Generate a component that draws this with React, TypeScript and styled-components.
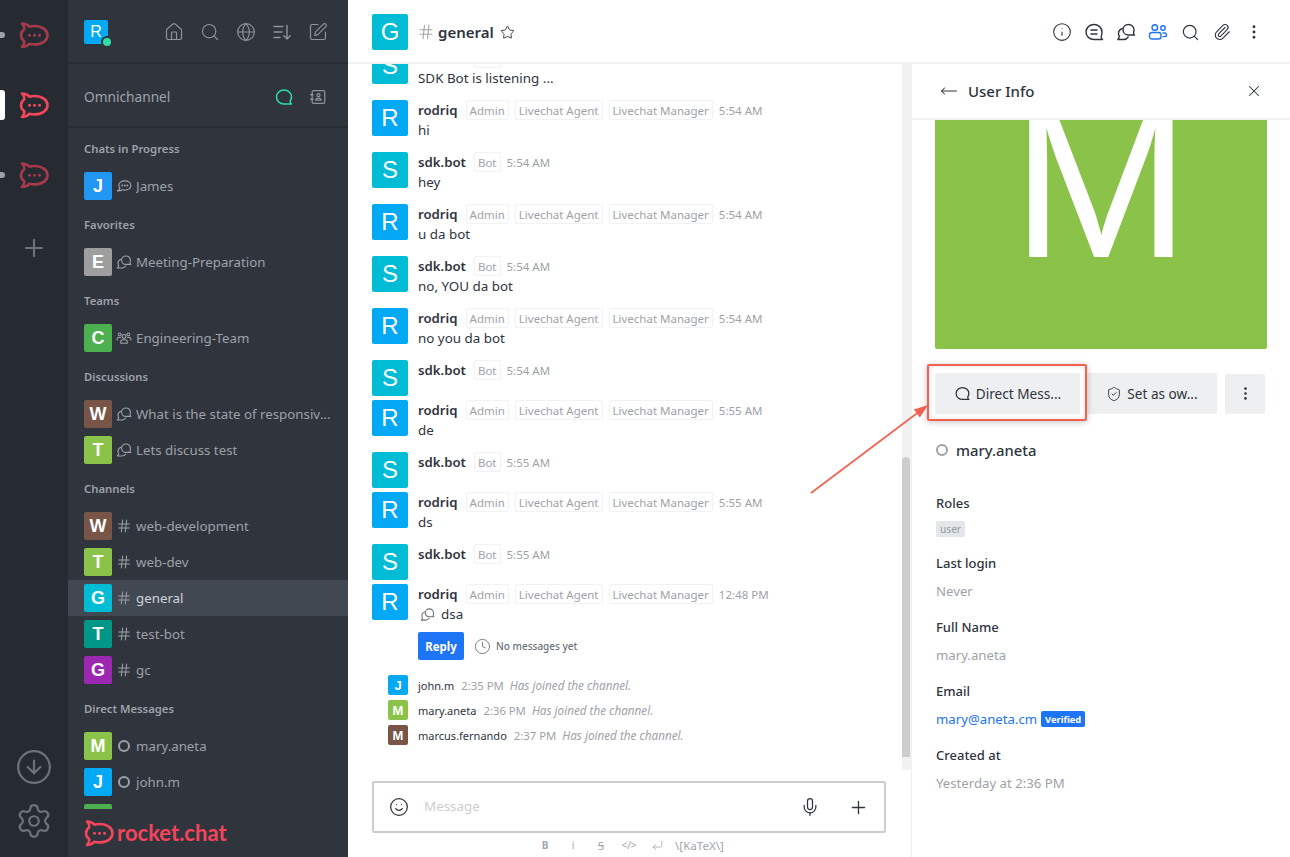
import React from 'react'
import styled, { createGlobalStyle } from 'styled-components'
import {
  CircleArrowDown, EllipsisVertical, Globe, Hash, House, Info, Mic, Paperclip, Plus,
  Search, Settings, ShieldCheck, Smile, SquarePen, Star, X, Clock, CornerDownLeft, MoveLeft,
} from 'lucide-react'

const GlobalStyle = createGlobalStyle`
  html, body {
    margin: 0;
    height: 100%;
    overflow: hidden;
    background: #fff;
    font-family: "Noto Sans", "Liberation Sans", sans-serif;
  }
  * { box-sizing: border-box; }
`

const RED = '#f5455c'

type IconProps = { size?: number }

const RocketLogo: React.FC<{ size: number; color: string }> = ({ size, color }) => (
  <svg width={size} height={size * 0.9} viewBox="0 0 30 27" fill="none">
    <path
      d="M3 1.5C6 1.5 9 3 10.5 4.7C12 4.2 14 4 15.5 4C23 4 28.5 8 28.5 13.2C28.5 18.6 23 22.4 15.5 22.4C13.5 22.4 12 22.2 10.5 21.7C8.5 24 6 25 3 25C4.5 23 5.6 20.8 5.3 19.2C3 17.6 2 15.6 2 13.2C2 10.8 3.2 8.7 5.3 7.2C5.5 5.2 4.5 3.2 3 1.5Z"
      stroke={color}
      strokeWidth="2.6"
      strokeLinejoin="round"
    />
    <circle cx="10.5" cy="13.2" r="1.5" fill={color} />
    <circle cx="15.5" cy="13.2" r="1.5" fill={color} />
    <circle cx="20.5" cy="13.2" r="1.5" fill={color} />
  </svg>
)

const ChatIcon: React.FC<IconProps> = ({ size = 16 }) => (
  <svg width={size} height={size} viewBox="0 0 20 20" fill="none" stroke="currentColor" strokeWidth="1.5" strokeLinecap="round" strokeLinejoin="round">
    <path d="M10 3C5.8 3 2.5 6 2.5 10S5.8 17 10 17H17.5C16.4 16.2 16 15 16.2 14C17 12.9 17.5 11.5 17.5 10C17.5 6 14.2 3 10 3Z" />
  </svg>
)

const TeamChatIcon: React.FC<IconProps> = ({ size = 20 }) => (
  <svg width={size} height={size} viewBox="0 0 20 20" fill="none" stroke="currentColor" strokeWidth="1.4" strokeLinecap="round" strokeLinejoin="round">
    <path d="M10 2.5C5.6 2.5 2 5.7 2 10S5.6 17.5 10 17.5H18.5C17.4 16.7 17 15.6 17.2 14.4C17.7 13.2 18 11.6 18 10C18 5.7 14.4 2.5 10 2.5Z" />
    <path d="M7 8H13M7 12H13" />
  </svg>
)

const DiscussionIcon: React.FC<IconProps> = ({ size = 16 }) => (
  <svg width={size} height={size} viewBox="0 0 20 20" fill="none" stroke="currentColor" strokeWidth="1.4" strokeLinecap="round" strokeLinejoin="round">
    <path d="M12.5 2.5C9.4 2.5 7 4.8 7 7.8S9.4 13 12.5 13H18.5C17.6 12.3 17.4 11.4 17.6 10.5C17.9 9.7 18 8.8 18 7.8C18 4.8 15.6 2.5 12.5 2.5Z" />
    <path d="M6.2 6.5C3.9 7.3 2.5 9.3 2.5 11.5C2.5 12.6 2.8 13.5 3.3 14.3C3.3 15.4 2.8 16.5 1.8 17.5H7.5C9.5 17.5 11.2 16.5 12.2 15" />
  </svg>
)

const SortIcon: React.FC<IconProps> = ({ size = 20 }) => (
  <svg width={size} height={size} viewBox="0 0 20 20" fill="none" stroke="currentColor" strokeWidth="1.4" strokeLinecap="round" strokeLinejoin="round">
    <path d="M2 4.5H11M2 10H10M2 15.5H8" />
    <path d="M15 3.5V17M11.8 13.8L15 17L18.2 13.8" />
  </svg>
)

const ContactIcon: React.FC<IconProps> = ({ size = 18 }) => (
  <svg width={size} height={size} viewBox="0 0 20 20" fill="none" stroke="currentColor" strokeWidth="1.4" strokeLinecap="round" strokeLinejoin="round">
    <rect x="3.5" y="3" width="14" height="14" rx="1.5" />
    <path d="M1.8 7.5H4.6M1.8 12.5H4.6" />
    <circle cx="10.5" cy="8" r="1.7" />
    <path d="M7.5 13.5C7.5 11.8 8.5 11.2 10.5 11.2S13.5 11.8 13.5 13.5Z" />
  </svg>
)

const LivechatIcon: React.FC<IconProps> = ({ size = 16 }) => (
  <svg width={size} height={size} viewBox="0 0 20 20" fill="none" stroke="currentColor" strokeWidth="1.5" strokeLinecap="round" strokeLinejoin="round">
    <path d="M11 3.5C6.6 3.5 3.5 6 3.5 9.3C3.5 10.6 4 11.7 4.9 12.6C4.8 14 3.8 15.2 1.8 16C4.5 16.2 6.4 15.7 7.7 14.7C8.7 15 9.8 15.1 11 15.1C15.4 15.1 18.5 12.6 18.5 9.3S15.4 3.5 11 3.5Z" />
    <circle cx="7.8" cy="9.3" r="0.5" />
    <circle cx="11" cy="9.3" r="0.5" />
    <circle cx="14.2" cy="9.3" r="0.5" />
  </svg>
)

const TeamIcon: React.FC<IconProps> = ({ size = 16 }) => (
  <svg width={size} height={size} viewBox="0 0 20 20" fill="none" stroke="currentColor" strokeWidth="1.4" strokeLinecap="round" strokeLinejoin="round">
    <circle cx="10" cy="8" r="2.4" />
    <path d="M6 16.5V14.5C6 13 7.2 12.2 8.5 12.2H11.5C12.8 12.2 14 13 14 14.5V16.5Z" />
    <circle cx="4.6" cy="5.6" r="1.8" />
    <circle cx="15.4" cy="5.6" r="1.8" />
    <path d="M1.5 12.5V11C1.5 10 2.3 9.4 3.2 9.4H5.5M18.5 12.5V11C18.5 10 17.7 9.4 16.8 9.4H14.5" />
  </svg>
)

const MembersIcon: React.FC<IconProps> = ({ size = 20 }) => (
  <svg width={size} height={size} viewBox="0 0 20 20" fill="none" stroke="currentColor" strokeWidth="1.4" strokeLinecap="round" strokeLinejoin="round">
    <circle cx="6.8" cy="5.5" r="2.8" />
    <circle cx="15" cy="6" r="2.2" />
    <rect x="1.5" y="10.5" width="11.5" height="6.5" rx="2.5" />
    <path d="M15 11H16.5C17.6 11 18.5 11.7 18.5 12.8C18.5 13.9 17.6 14.6 16.5 14.6H15" />
  </svg>
)

type Avatarish = { letter: string; color: string }

type RoomItem = Avatarish & { name: string; icon: 'hash' | 'discussion' | 'team' | 'live' | 'offline' | 'none'; active?: boolean }
type RoomGroup = { title: string; rooms: RoomItem[] }

const GROUPS: RoomGroup[] = [
  { title: 'Chats in Progress', rooms: [{ letter: 'J', color: '#2196f3', name: 'James', icon: 'live' }] },
  { title: 'Favorites', rooms: [{ letter: 'E', color: '#9e9e9e', name: 'Meeting-Preparation', icon: 'discussion' }] },
  { title: 'Teams', rooms: [{ letter: 'C', color: '#4caf50', name: 'Engineering-Team', icon: 'team' }] },
  {
    title: 'Discussions',
    rooms: [
      { letter: 'W', color: '#795548', name: 'What is the state of responsive design?', icon: 'discussion' },
      { letter: 'T', color: '#8bc34a', name: 'Lets discuss test', icon: 'discussion' },
    ],
  },
  {
    title: 'Channels',
    rooms: [
      { letter: 'W', color: '#795548', name: 'web-development', icon: 'hash' },
      { letter: 'T', color: '#8bc34a', name: 'web-dev', icon: 'hash' },
      { letter: 'G', color: '#00bcd4', name: 'general', icon: 'hash', active: true },
      { letter: 'T', color: '#009688', name: 'test-bot', icon: 'hash' },
      { letter: 'G', color: '#9c27b0', name: 'gc', icon: 'hash' },
    ],
  },
  {
    title: 'Direct Messages',
    rooms: [
      { letter: 'M', color: '#8bc34a', name: 'mary.aneta', icon: 'offline' },
      { letter: 'J', color: '#03a9f4', name: 'john.m', icon: 'offline' },
      // only the top edge of this row shows above the footer
      { letter: '', color: '#4caf50', name: '', icon: 'none' },
    ],
  },
]

type Msg = Avatarish & { user: string; tags: string[]; time: string; text?: string }

const RODRIQ = { letter: 'R', color: '#03a9f4', user: 'rodriq', tags: ['Admin', 'Livechat Agent', 'Livechat Manager'] }
const BOT = { letter: 'S', color: '#00bcd4', user: 'sdk.bot', tags: ['Bot'] }

const MESSAGES: Msg[] = [
  { ...BOT, time: '5:54 AM', text: 'SDK Bot is listening ...' },
  { ...RODRIQ, time: '5:54 AM', text: 'hi' },
  { ...BOT, time: '5:54 AM', text: 'hey' },
  { ...RODRIQ, time: '5:54 AM', text: 'u da bot' },
  { ...BOT, time: '5:54 AM', text: 'no, YOU da bot' },
  { ...RODRIQ, time: '5:54 AM', text: 'no you da bot' },
  { ...BOT, time: '5:54 AM' },
  { ...RODRIQ, time: '5:55 AM', text: 'de' },
  { ...BOT, time: '5:55 AM' },
  { ...RODRIQ, time: '5:55 AM', text: 'ds' },
  { ...BOT, time: '5:55 AM' },
]

const JOINS = [
  { letter: 'J', color: '#03a9f4', user: 'john.m', time: '2:35 PM' },
  { letter: 'M', color: '#8bc34a', user: 'mary.aneta', time: '2:36 PM' },
  { letter: 'M', color: '#795548', user: 'marcus.fernando', time: '2:37 PM' },
]

const INFO = [
  { label: 'Last login', value: 'Never' },
  { label: 'Full Name', value: 'mary.aneta' },
]

const App: React.FC = () => (
  <Page>
    <GlobalStyle />
    <Rail>
      <RailLogo>
        <RailMark />
        <RocketLogo size={30} color="#a63a4a" />
      </RailLogo>
      <RailLogo>
        <RailMark $active />
        <RocketLogo size={30} color={RED} />
      </RailLogo>
      <RailLogo>
        <RailMark />
        <RocketLogo size={30} color="#a63a4a" />
      </RailLogo>
      <RailAdd>
        <Plus size={28} strokeWidth={1.8} />
      </RailAdd>
      <RailBottom>
        <CircleArrowDown size={38} strokeWidth={1.4} />
        <Settings size={38} strokeWidth={1.4} />
      </RailBottom>
    </Rail>

    <Sidebar>
      <SideHeader>
        <UserBadge>
          <Avatar $size={24} $bg="#03a9f4">R</Avatar>
          <OnlineDot />
        </UserBadge>
        <SideTools>
          <House size={20} strokeWidth={1.4} />
          <Search size={20} strokeWidth={1.4} />
          <Globe size={20} strokeWidth={1.4} />
          <SortIcon />
          <SquarePen size={20} strokeWidth={1.4} />
        </SideTools>
      </SideHeader>
      <OmniRow>
        <span>Omnichannel</span>
        <OmniTools>
          <OmniChat><ChatIcon size={20} /></OmniChat>
          <ContactIcon />
        </OmniTools>
      </OmniRow>
      <RoomList>
        {GROUPS.map((group) => (
          <React.Fragment key={group.title}>
            <GroupTitle>{group.title}</GroupTitle>
            {group.rooms.map((room, i) => (
              <Room key={i} $active={room.active}>
                <Avatar $size={28} $bg={room.color} $bold>{room.letter}</Avatar>
                <RoomIcon>
                  {room.icon === 'hash' && <Hash size={16} strokeWidth={1.5} />}
                  {room.icon === 'discussion' && <DiscussionIcon />}
                  {room.icon === 'team' && <TeamIcon />}
                  {room.icon === 'live' && <LivechatIcon />}
                  {room.icon === 'offline' && <OfflineRing $size={12} $color="#9ea2a8" />}
                </RoomIcon>
                <RoomName $active={room.active}>{room.name}</RoomName>
              </Room>
            ))}
          </React.Fragment>
        ))}
      </RoomList>
      <SideFooter>
        <RocketLogo size={30} color={RED} />
        <Wordmark>rocket.chat</Wordmark>
      </SideFooter>
    </Sidebar>

    <Main>
      <RoomHeader>
        <Avatar $size={36} $bg="#00bcd4">G</Avatar>
        <HeaderHash><Hash size={18} strokeWidth={1.4} /></HeaderHash>
        <RoomTitle>general</RoomTitle>
        <HeaderStar><Star size={15} strokeWidth={1.5} /></HeaderStar>
        <HeaderTools>
          <Info size={20} strokeWidth={1.3} />
          <TeamChatIcon />
          <DiscussionIcon size={20} />
          <ActiveTool><MembersIcon /></ActiveTool>
          <Search size={19} strokeWidth={1.5} />
          <Paperclip size={18} strokeWidth={1.5} />
          <EllipsisVertical size={18} strokeWidth={1.8} />
        </HeaderTools>
      </RoomHeader>

      <Content>
        <ChatColumn>
          <FeedRow>
            <Feed>
              {MESSAGES.map((m, i) => (
                <Message key={i} $tight={!m.text}>
                  <Avatar $size={36} $bg={m.color}>{m.letter}</Avatar>
                  <MessageBody>
                    <MessageMeta>
                      <UserName>{m.user}</UserName>
                      {m.tags.map((t) => <Tag key={t}>{t}</Tag>)}
                      <Time>{m.time}</Time>
                    </MessageMeta>
                    {m.text && <MessageText>{m.text}</MessageText>}
                  </MessageBody>
                </Message>
              ))}
              <Message>
                <Avatar $size={36} $bg="#03a9f4">R</Avatar>
                <MessageBody>
                  <MessageMeta>
                    <UserName>rodriq</UserName>
                    {RODRIQ.tags.map((t) => <Tag key={t}>{t}</Tag>)}
                    <Time>12:48 PM</Time>
                  </MessageMeta>
                  <MessageText>
                    <ThreadIcon><DiscussionIcon size={15} /></ThreadIcon>dsa
                  </MessageText>
                  <ThreadRow>
                    <ReplyButton>Reply</ReplyButton>
                    <Clock size={17} strokeWidth={1.3} />
                    <NoMessages>No messages yet</NoMessages>
                  </ThreadRow>
                </MessageBody>
              </Message>
              <Joins>
                {JOINS.map((j) => (
                  <Join key={j.user}>
                    <Avatar $size={20} $bg={j.color} $bold>{j.letter}</Avatar>
                    <JoinName>{j.user}</JoinName>
                    <JoinTime>{j.time}</JoinTime>
                    <JoinText>Has joined the channel.</JoinText>
                  </Join>
                ))}
              </Joins>
            </Feed>
            <ScrollTrack>
              <ScrollThumb />
            </ScrollTrack>
          </FeedRow>
          <Composer>
            <Smile size={20} strokeWidth={1.5} />
            <Placeholder>Message</Placeholder>
            <MicSlot><Mic size={20} strokeWidth={1.5} /></MicSlot>
            <Plus size={21} strokeWidth={1.5} />
          </Composer>
          <FormatBar>
            <FormatItem $bold>B</FormatItem>
            <FormatItem>i</FormatItem>
            <FormatItem $strike>S</FormatItem>
            <FormatItem>&lt;/&gt;</FormatItem>
            <FormatItem><CornerDownLeft size={13} strokeWidth={1.4} /></FormatItem>
            <KatexLabel>\[KaTeX\]</KatexLabel>
          </FormatBar>
        </ChatColumn>

        <Panel>
          <PanelHeader>
            <MoveLeft size={18} strokeWidth={1.4} />
            <PanelTitle>User Info</PanelTitle>
            <X size={18} strokeWidth={1.4} />
          </PanelHeader>
          <PanelBody>
            <Picture>M</Picture>
            <Actions>
              <ActionButton $width={145}><ChatIcon size={17} />Direct Mess...</ActionButton>
              <ActionButton $width={130}><ShieldCheck size={16} strokeWidth={1.4} />Set as ow...</ActionButton>
              <MoreButton><EllipsisVertical size={17} strokeWidth={1.8} /></MoreButton>
            </Actions>
            <UserLine>
              <OfflineRing $size={12} $color="#9ea2a8" />
              <UserHandle>mary.aneta</UserHandle>
            </UserLine>
            <FieldLabel>Roles</FieldLabel>
            <RoleRow><RoleTag>user</RoleTag></RoleRow>
            {INFO.map((f) => (
              <React.Fragment key={f.label}>
                <FieldLabel>{f.label}</FieldLabel>
                <FieldValue>{f.value}</FieldValue>
              </React.Fragment>
            ))}
            <FieldLabel>Email</FieldLabel>
            <FieldValue>
              <MailLink>mary@aneta.cm</MailLink>
              <Verified>Verified</Verified>
            </FieldValue>
            <FieldLabel>Created at</FieldLabel>
            <FieldValue>Yesterday at 2:36 PM</FieldValue>
          </PanelBody>
        </Panel>
      </Content>
    </Main>

    <CalloutBox />
    <CalloutArrow width="130" height="100" viewBox="0 0 130 100" fill="none">
      <path d="M1 98L110 16" stroke="#f4604f" strokeWidth="1.6" />
      <path d="M118 10L103.8 14.4L109.8 22.4Z" fill="#f4604f" />
    </CalloutArrow>
  </Page>
)

const Page = styled.div`
  position: relative;
  display: flex;
  width: 1290px;
  height: 857px;
  overflow: hidden;
`

const Rail = styled.nav`
  display: flex;
  flex-direction: column;
  flex: 0 0 68px;
  background: #262a31;
  color: #6c727a;
`

const RailLogo = styled.div`
  position: relative;
  display: flex;
  align-items: center;
  justify-content: center;
  height: 70px;
`

const RailMark = styled.span<{ $active?: boolean }>`
  position: absolute;
  left: 0;
  top: 50%;
  width: 5px;
  height: ${({ $active }) => ($active ? '30px' : '6px')};
  margin-top: ${({ $active }) => ($active ? '-15px' : '-3px')};
  background: ${({ $active }) => ($active ? '#fff' : '#9ea2a8')};
  border-radius: 0 3px 3px 0;
`

const RailAdd = styled.div`
  display: flex;
  align-items: center;
  justify-content: center;
  height: 76px;
`

const RailBottom = styled.div`
  display: flex;
  flex-direction: column;
  align-items: center;
  gap: 16px;
  margin-top: auto;
  padding-bottom: 17px;
`

const Sidebar = styled.aside`
  display: flex;
  flex-direction: column;
  flex: 0 0 280px;
  width: 280px;
  min-width: 0;
  background: #2f343d;
  color: #9ea2a8;
`

const SideHeader = styled.div`
  display: flex;
  align-items: center;
  justify-content: space-between;
  flex: 0 0 64px;
  padding: 2px 20px 0 16px;
  border-bottom: 2px solid #282c33;
`

const UserBadge = styled.div`
  position: relative;
  width: 24px;
  height: 24px;
`

const OnlineDot = styled.span`
  position: absolute;
  right: -5px;
  bottom: -4px;
  width: 12px;
  height: 12px;
  border-radius: 50%;
  background: #2de0a5;
  border: 2px solid #2f343d;
`

const SideTools = styled.div`
  display: flex;
  gap: 16px;
  color: #8e939a;
`

const OmniRow = styled.div`
  display: flex;
  align-items: center;
  justify-content: space-between;
  flex: 0 0 64px;
  padding: 3px 21px 0 16px;
  border-bottom: 2px solid #282c33;
  font-size: 13.7px;
`

const OmniTools = styled.div`
  display: flex;
  align-items: center;
  gap: 15px;
  color: #8e939a;
`

const OmniChat = styled.span`
  display: flex;
  color: #2de0a5;
`

const RoomList = styled.div`
  flex: 1;
  min-height: 0;
  overflow: hidden;
`

const GroupTitle = styled.div`
  display: flex;
  align-items: center;
  height: 40px;
  padding: 1px 16px 0;
  font-size: 11.3px;
  font-weight: 600;
  color: #9ea2a8;
`

const Room = styled.div<{ $active?: boolean }>`
  display: flex;
  align-items: center;
  height: 36px;
  padding: 0 15px 0 16px;
  background: ${({ $active }) => ($active ? '#414852' : 'transparent')};
`

const RoomIcon = styled.span`
  display: flex;
  align-items: center;
  justify-content: center;
  flex: 0 0 16px;
  margin: 0 4px;
`

const RoomName = styled.span<{ $active?: boolean }>`
  min-width: 0;
  padding-bottom: 1px;
  overflow: hidden;
  white-space: nowrap;
  text-overflow: ellipsis;
  font-size: 13.3px;
  color: ${({ $active }) => ($active ? '#d0d3d7' : '#9ea2a8')};
`

const SideFooter = styled.div`
  display: flex;
  align-items: flex-start;
  gap: 3px;
  flex: 0 0 48px;
  padding: 11px 16px 0;
  background: #2f343d;
`

const Wordmark = styled.span`
  font-family: "Lato", sans-serif;
  font-size: 22px;
  font-weight: 700;
  line-height: 25px;
  color: ${RED};
`

const Avatar = styled.div<{ $size: number; $bg: string; $bold?: boolean }>`
  display: flex;
  align-items: center;
  justify-content: center;
  flex: 0 0 ${({ $size }) => $size}px;
  width: ${({ $size }) => $size}px;
  height: ${({ $size }) => $size}px;
  border-radius: 2px;
  background: ${({ $bg }) => $bg};
  color: #fff;
  font-family: "Liberation Sans", sans-serif;
  font-size: ${({ $size }) => Math.round($size * 0.66)}px;
  font-weight: ${({ $bold }) => ($bold ? 700 : 400)};
  line-height: 1;
`

const OfflineRing = styled.span<{ $size: number; $color: string }>`
  display: block;
  flex: 0 0 ${({ $size }) => $size}px;
  width: ${({ $size }) => $size}px;
  height: ${({ $size }) => $size}px;
  border-radius: 50%;
  border: 2px solid ${({ $color }) => $color};
`

const Main = styled.main`
  display: flex;
  flex-direction: column;
  flex: 1;
  min-width: 0;
  color: #2f343d;
`

const RoomHeader = styled.header`
  display: flex;
  align-items: center;
  flex: 0 0 64px;
  padding: 2px 20px 0 24px;
  border-bottom: 2px solid #f1f2f4;
`

const HeaderHash = styled.span`
  display: flex;
  margin-left: 9px;
  color: #9ea2a8;
`

const RoomTitle = styled.h1`
  margin: 0 0 0 3px;
  font-size: 15px;
  font-weight: 600;
  color: #2f343d;
`

const HeaderStar = styled.span`
  display: flex;
  margin-left: 6px;
`

const HeaderTools = styled.div`
  display: grid;
  grid-template-columns: repeat(7, 32px);
  align-items: center;
  justify-items: center;
  margin-left: auto;
  color: #2f343d;
`

const ActiveTool = styled.span`
  display: flex;
  color: #1d74f5;
`

const Content = styled.div`
  display: flex;
  flex: 1;
  min-height: 0;
`

const ChatColumn = styled.section`
  display: flex;
  flex-direction: column;
  flex: 0 0 563px;
  min-width: 0;
`

const FeedRow = styled.div`
  display: flex;
  flex: 1;
  min-height: 0;
`

const Feed = styled.div`
  flex: 1;
  min-width: 0;
  overflow: hidden;
  padding: 0 0 0 24px;
`

const Message = styled.article<{ $tight?: boolean }>`
  display: flex;
  gap: 10px;
  margin-bottom: ${({ $tight }) => ($tight ? '4px' : '12px')};

  &:first-child {
    margin-top: -16px;
  }
`

const MessageBody = styled.div`
  flex: 1;
  min-width: 0;
`

const MessageMeta = styled.div`
  display: flex;
  align-items: center;
  gap: 6px;
  height: 20px;
`

const UserName = styled.span`
  margin-right: 2px;
  font-size: 13.2px;
  font-weight: 600;
  color: #2f343d;
`

const Tag = styled.span`
  display: inline-flex;
  align-items: center;
  height: 20px;
  padding: 0 3px;
  border: 1px solid #f1f2f4;
  border-radius: 2px;
  font-size: 11.5px;
  color: #9ea2a8;
`

const Time = styled.span`
  font-size: 11.5px;
  color: #9ea2a8;
`

const MessageText = styled.div`
  display: flex;
  align-items: center;
  height: 20px;
  font-size: 13.4px;
  color: #2f343d;
`

const ThreadIcon = styled.span`
  display: flex;
  margin: 0 6px 0 2px;
  color: #6c727a;
`

const ThreadRow = styled.div`
  display: flex;
  align-items: center;
  margin-top: 8px;
  color: #6c727a;
`

const ReplyButton = styled.span`
  display: flex;
  align-items: center;
  justify-content: center;
  width: 46px;
  height: 28px;
  margin-right: 10px;
  border-radius: 2px;
  background: #1d74f5;
  color: #fff;
  font-size: 11.5px;
  font-weight: 700;
`

const NoMessages = styled.span`
  margin-left: 5px;
  font-size: 10px;
  font-weight: 500;
  color: #6c727a;
`

const Joins = styled.div`
  display: flex;
  flex-direction: column;
  gap: 5px;
  margin: 15px 0 0 16px;
`

const Join = styled.div`
  display: flex;
  align-items: center;
  height: 20px;
  font-size: 11.7px;
`

const JoinName = styled.span`
  margin-left: 10px;
  font-size: 11px;
  color: #2f343d;
`

const JoinTime = styled.span`
  margin-left: 7px;
  font-size: 11.3px;
  color: #9ea2a8;
`

const JoinText = styled.span`
  margin-left: 6px;
  font-style: italic;
  color: #9ea2a8;
`

const ScrollTrack = styled.div`
  flex: 0 0 9px;
  background: #f1f1f1;
`

const ScrollThumb = styled.div`
  height: 300px;
  margin-top: 393px;
  width: 8px;
  border-radius: 4px 4px 0 0;
  background: #cdcdcb;
`

const Composer = styled.div`
  display: flex;
  align-items: center;
  flex: 0 0 52px;
  margin: 11px 25px 0 24px;
  padding: 0 15px 0 15px;
  border: 2px solid #cbced1;
  border-radius: 2px;
  color: #2f343d;
`

const Placeholder = styled.span`
  flex: 1;
  margin-left: 15px;
  padding-bottom: 2px;
  font-size: 13.4px;
  color: #cbced1;
`

const MicSlot = styled.span`
  display: flex;
  margin-right: 28px;
`

const FormatBar = styled.div`
  display: flex;
  align-items: center;
  flex: 0 0 24px;
  padding-left: 183px;
  color: #a2a6ac;
`

const FormatItem = styled.span<{ $bold?: boolean; $strike?: boolean }>`
  display: flex;
  align-items: center;
  justify-content: center;
  width: 28px;
  font-size: ${({ $strike }) => ($strike ? '11px' : '10px')};
  font-weight: ${({ $bold }) => ($bold ? 700 : 400)};
  text-decoration: ${({ $strike }) => ($strike ? 'line-through' : 'none')};
`

const KatexLabel = styled.span`
  margin-left: 4px;
  font-size: 11.6px;
`

const Panel = styled.aside`
  display: flex;
  flex-direction: column;
  flex: 1;
  min-width: 0;
  border-left: 1px solid #f1f1f1;
`

const PanelHeader = styled.div`
  display: flex;
  align-items: center;
  flex: 0 0 56px;
  padding: 0 27px 0 28px;
  border-bottom: 2px solid #f1f2f4;
  color: #2f343d;
`

const PanelTitle = styled.h2`
  flex: 1;
  margin: 0 0 0 10px;
  font-size: 15px;
  font-weight: 500;
`

const PanelBody = styled.div`
  flex: 1;
  min-height: 0;
  overflow: hidden;
  padding: 0 23px;
`

const Picture = styled.div`
  display: flex;
  align-items: center;
  justify-content: center;
  width: 332px;
  height: 332px;
  margin-top: -103px;
  border-radius: 2px;
  background: #8bc34a;
  color: #fff;
  font-family: "Liberation Sans", sans-serif;
  font-size: 214px;
  line-height: 1;
`

const Actions = styled.div`
  display: flex;
  align-items: center;
  gap: 7px;
  margin-top: 24px;
`

const ActionButton = styled.div<{ $width: number }>`
  display: flex;
  align-items: center;
  justify-content: center;
  gap: 5px;
  flex: 0 0 ${({ $width }) => $width}px;
  height: 41px;
  border-radius: 2px;
  background: #eeeff1;
  font-size: 13.6px;
  color: #2f343d;
`

const MoreButton = styled.div`
  display: flex;
  align-items: center;
  justify-content: center;
  flex: 0 0 40px;
  height: 40px;
  margin-left: 1px;
  border-radius: 2px;
  background: #eeeff1;
`

const UserLine = styled.div`
  display: flex;
  align-items: center;
  gap: 8px;
  height: 24px;
  margin: 24px 0 31px 1px;
`

const UserHandle = styled.span`
  font-size: 14.8px;
  font-weight: 500;
  color: #2f343d;
`

const FieldLabel = styled.div`
  display: flex;
  align-items: center;
  height: 20px;
  margin-bottom: 8px;
  margin-left: 1px;
  font-size: 13px;
  font-weight: 500;
  color: #2f343d;
`

const FieldValue = styled.div`
  display: flex;
  align-items: center;
  height: 20px;
  margin-bottom: 16px;
  margin-left: 1px;
  font-size: 13.2px;
  color: #9ea2a8;
`

const RoleRow = styled.div`
  display: flex;
  align-items: center;
  height: 16px;
  margin: 0 0 16px 1px;
`

const RoleTag = styled.span`
  display: inline-flex;
  align-items: center;
  height: 16px;
  padding: 0 4px;
  border-radius: 2px;
  background: #e4e7ea;
  font-size: 10px;
  font-weight: 500;
  color: #9ea2a8;
`

const MailLink = styled.span`
  color: #1d74f5;
`

const Verified = styled.span`
  display: inline-flex;
  align-items: center;
  height: 16px;
  margin-left: 4px;
  padding: 0 4px;
  border-radius: 2px;
  background: #1d74f5;
  color: #fff;
  font-size: 9.3px;
  font-weight: 700;
`

const CalloutBox = styled.div`
  position: absolute;
  left: 927px;
  top: 364px;
  width: 160px;
  height: 57px;
  border: 2px solid #f4604f;
  border-radius: 2px;
  box-shadow: 0 1px 6px rgba(0, 0, 0, 0.25), inset 0 0 5px rgba(0, 0, 0, 0.12);
`

const CalloutArrow = styled.svg`
  position: absolute;
  left: 810px;
  top: 395px;
`

export default App
